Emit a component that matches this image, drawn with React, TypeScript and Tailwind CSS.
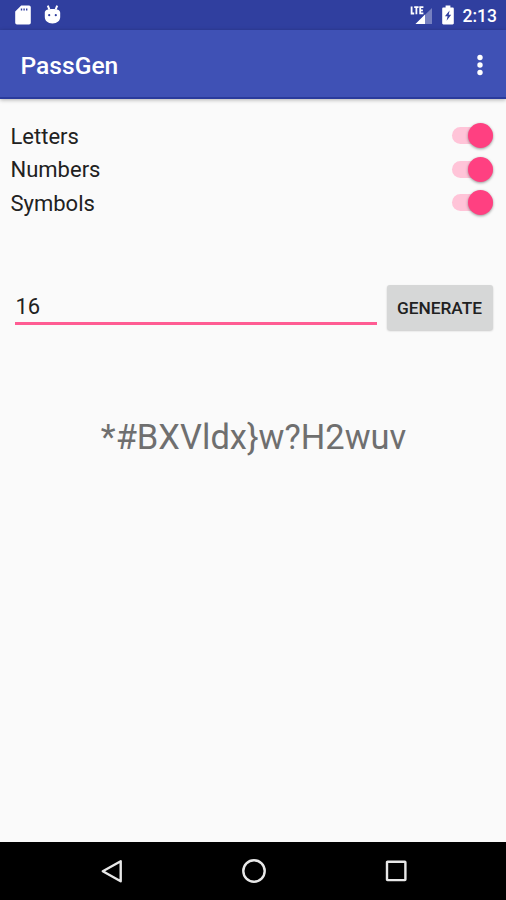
import { useState } from "react";

function StatusBar() {
  return (
    <div className="flex h-[30px] items-center bg-[#303f9f] pl-[15px] pr-[9px] text-white">
      <svg width="16" height="20" viewBox="0 0 16 20" fill="currentColor">
        <path
          fillRule="evenodd"
          d="M6.2 0.5H14a1.8 1.8 0 0 1 1.8 1.8v15.4a1.8 1.8 0 0 1-1.8 1.8H2a1.8 1.8 0 0 1-1.8-1.8V6.6ZM5.8 3.6v2h1.4v-2ZM8.4 3.6v2h1.4v-2ZM11 3.6v2h1.4v-2Z"
        />
      </svg>
      <svg className="ml-[13px]" width="17" height="20" viewBox="0 0 17 20" fill="currentColor">
        <path d="M3.8 .7l1.6 4M13.200 .7l-1.600 4" stroke="currentColor" strokeWidth="2" />
        <path
          fillRule="evenodd"
          d="M.8 7.8C.8 5 4 4 8.5 4s7.700 1 7.700 3.8v4.200c0 3.700-3 6.400-7.700 6.400S.8 15.700.8 12ZM5.200 9.100a1.100 1.100 0 1 0 0 2.200 1.100 1.100 0 0 0 0-2.200ZM11.800 9.100a1.100 1.100 0 1 0 0 2.200 1.100 1.100 0 0 0 0-2.200Z"
        />
      </svg>
      <div className="ml-auto flex items-center">
        <svg width="23" height="20" viewBox="0 0 23 20" fill="none">
          <path d="M22 3V19H5.500Z" fill="#7680c0" />
          <path d="M15 9.500V19H5.500Z" fill="#fff" />
          <path d="M1.600 1.500v7h2.600M4.200 2.200h4.400M6.400 2.200v7M13.400 2.200H10.200v6.200h3.200M10.200 5.300h2.700" stroke="#fff" strokeWidth="1.800" />
        </svg>
        <svg className="ml-[9px]" width="12" height="20" viewBox="0 0 12 20" fill="currentColor">
          <path
            fillRule="evenodd"
            d="M3.600.5h4.800v1.900h2.200c.7 0 1.200.5 1.200 1.200v14.700c0 .7-.5 1.200-1.200 1.200H1.400c-.7 0-1.200-.5-1.200-1.200V3.600c0-.7.5-1.200 1.200-1.200h2.200ZM7.600 5.600 2.900 11.300h2.700l-1 4.500L9.200 9.800H6.700Z"
          />
        </svg>
        <span className="ml-[9px] pt-0.5 text-[17.500px] leading-[28px] font-medium">2:13</span>
      </div>
    </div>
  );
}

function Toolbar() {
  return (
    <div className="flex h-[69px] items-center justify-between border-b-2 border-[#2a3b9c] bg-[#3f51b5] pl-[20.500px] pr-[22px] pt-[3px] text-white shadow-[0_1px_4px_rgba(0,0,0,0.3)]">
      <h1 className="pt-[2px] text-[24.600px] leading-8 font-medium">PassGen</h1>
      <svg className="-mt-px" width="8" height="22" viewBox="0 0 8 22" fill="currentColor">
        <circle cx="4" cy="3.500" r="2.700" />
        <circle cx="4" cy="11" r="2.700" />
        <circle cx="4" cy="18.500" r="2.700" />
      </svg>
    </div>
  );
}

function Toggle({ label }: { label: string }) {
  const [on, setOn] = useState(true);

  return (
    <div className="flex h-[33.400px] items-center justify-between pl-[10.500px] pr-[13px]">
      <span className="pt-[1.200px] text-[22px] leading-[31px] text-[#212121]">{label}</span>
      <button
        role="switch"
        aria-checked={on}
        aria-label={label}
        onClick={() => setOn(!on)}
        className={`flex h-[18px] w-[41px] items-center rounded-full ${on ? "justify-end" : "justify-start"}`}
      >
        <span className="-mr-[25px] h-[17px] w-[41px] rounded-full bg-[#ffc4d8]" />
        <span className="relative size-[25px] shrink-0 rounded-full bg-[#ff4081] shadow-[0_1px_3px_rgba(0,0,0,0.4)]" />
      </button>
    </div>
  );
}

function NavBar() {
  return (
    <div className="flex h-[58px] items-center justify-between bg-black pl-[100px] pr-[98px] text-[#e8e8e8]">
      <svg width="24" height="26" viewBox="0 0 24 26" fill="none" stroke="currentColor" strokeWidth="2.400">
        <path d="M20.700 3.200v20L2.800 13.200Z" strokeLinejoin="round" />
      </svg>
      <svg width="26" height="26" viewBox="0 0 26 26" fill="none" stroke="currentColor" strokeWidth="2.400">
        <circle cx="13" cy="13" r="10.700" />
      </svg>
      <svg width="24" height="26" viewBox="0 0 24 26" fill="none" stroke="currentColor" strokeWidth="2.400">
        <rect x="3" y="3.700" width="18.400" height="18.400" rx="0.500" />
      </svg>
    </div>
  );
}

function App() {
  return (
    <div className="flex h-[900px] w-[506px] flex-col bg-[#fafafa] font-['Roboto',sans-serif]">
      <StatusBar />
      <Toolbar />
      <main className="flex flex-1 flex-col pt-[20px]">
        <Toggle label="Letters" />
        <Toggle label="Numbers" />
        <Toggle label="Symbols" />
        <div className="mt-[66px] flex h-[45px] items-start pl-[15px] pr-[13px]">
          <input
            defaultValue="16"
            className="h-[40px] w-[362px] border-b-3 border-[#ff5c93] bg-transparent pt-[5px] pl-[0.500px] text-[22px] text-[#212121] outline-none"
          />
          <button className="ml-[10px] h-[45px] flex-1 rounded-[3px] bg-[#d6d7d7] pr-px pt-[2px] text-[17.300px] font-medium text-[#212121] shadow-[0_1px_2px_rgba(0,0,0,0.2)]">
            GENERATE
          </button>
        </div>
        <p className="mt-[85px] pl-px text-center text-[34.450px] leading-[44px] text-[#6f6f6f]">
          {"*#BXVldx}w?H2wuv"}
        </p>
      </main>
      <NavBar />
    </div>
  );
}

export default App;
